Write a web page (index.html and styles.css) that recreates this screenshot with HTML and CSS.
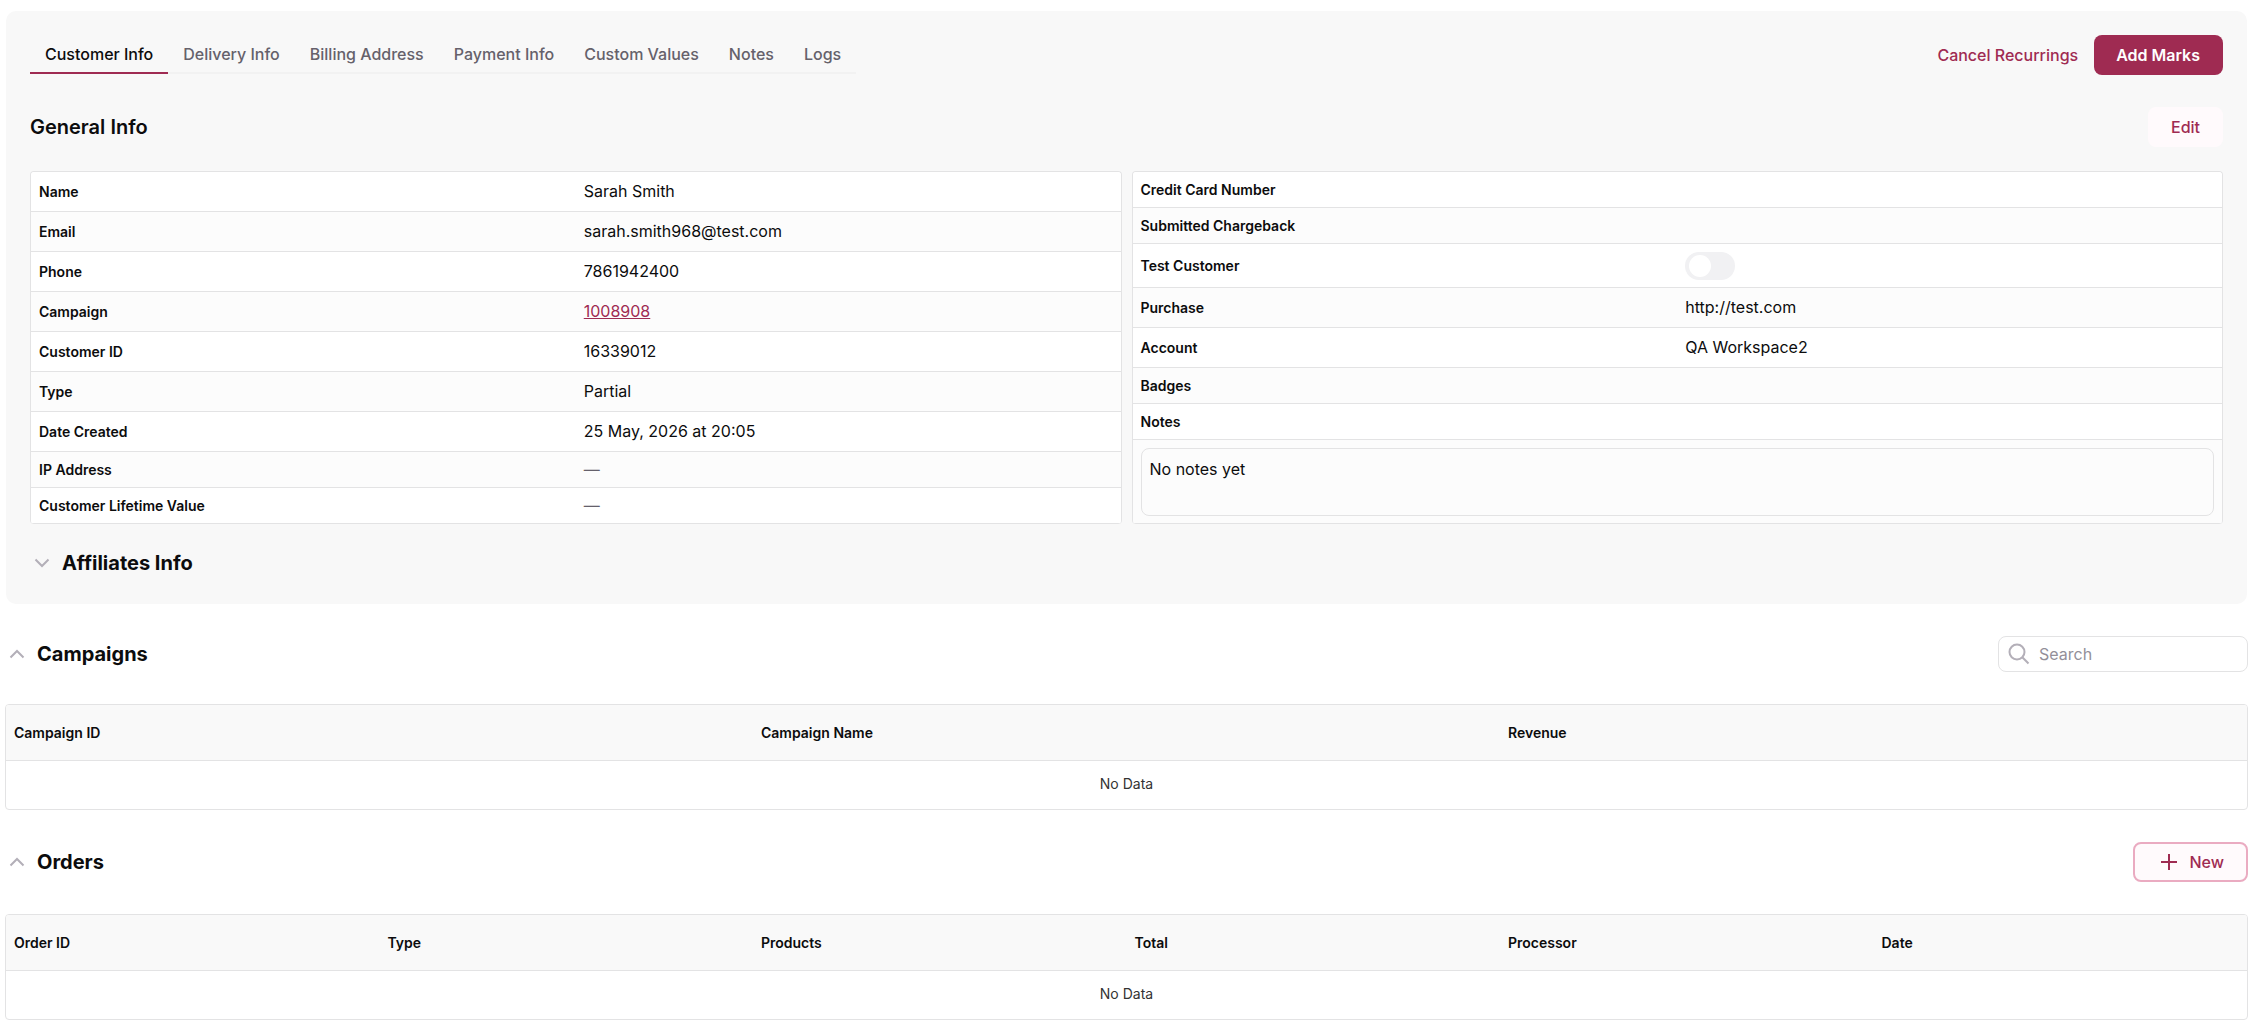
FILE: index.html
```html
<!doctype html>
<html lang="en">
<head>
  <meta charset="UTF-8">
  <meta name="viewport" content="width=device-width, initial-scale=1">
  <title>Customer Info</title>
  <link rel="stylesheet" href="styles.css">
</head>
<body>
  <main>
    <div class="panel">
      <div class="panel-top">
        <nav class="tabs">
          <a href="#customer" class="tab on">Customer Info</a>
          <a href="#delivery" class="tab">Delivery Info</a>
          <a href="#billing" class="tab">Billing Address</a>
          <a href="#payment" class="tab">Payment Info</a>
          <a href="#values" class="tab">Custom Values</a>
          <a href="#notes" class="tab">Notes</a>
          <a href="#logs" class="tab">Logs</a>
        </nav>
        <div class="actions">
          <button type="button" class="btn btn-text">Cancel Recurrings</button>
          <button type="button" class="btn btn-primary">Add Marks</button>
        </div>
      </div>

      <div class="panel-head">
        <h2 class="title">General Info</h2>
        <button type="button" class="btn btn-soft">Edit</button>
      </div>

      <div class="info">
        <table class="info-table">
          <tr><th scope="row">Name</th><td>Sarah Smith</td></tr>
          <tr><th scope="row">Email</th><td>sarah.smith968@test.com</td></tr>
          <tr><th scope="row">Phone</th><td>7861942400</td></tr>
          <tr><th scope="row">Campaign</th><td><a href="#campaign">1008908</a></td></tr>
          <tr><th scope="row">Customer ID</th><td>16339012</td></tr>
          <tr><th scope="row">Type</th><td>Partial</td></tr>
          <tr><th scope="row">Date Created</th><td>25 May, 2026 at 20:05</td></tr>
          <tr class="short"><th scope="row">IP Address</th><td class="none">—</td></tr>
          <tr class="short"><th scope="row">Customer Lifetime Value</th><td class="none">—</td></tr>
        </table>

        <table class="info-table">
          <tr class="short"><th scope="row">Credit Card Number</th><td></td></tr>
          <tr class="short"><th scope="row">Submitted Chargeback</th><td></td></tr>
          <tr class="tall"><th scope="row"><label for="test">Test Customer</label></th><td><input type="checkbox" id="test" class="switch"></td></tr>
          <tr><th scope="row">Purchase</th><td>http://test.com</td></tr>
          <tr><th scope="row">Account</th><td>QA Workspace2</td></tr>
          <tr class="short"><th scope="row">Badges</th><td></td></tr>
          <tr class="short"><th scope="row"><label for="note">Notes</label></th><td></td></tr>
          <tr><td colspan="2" class="note-cell"><textarea id="note" class="note" readonly>No notes yet</textarea></td></tr>
        </table>
      </div>

      <div class="fold">
        <button type="button" class="arrow" aria-label="Open Affiliates Info">
          <svg width="16" height="10" viewBox="0 0 16 10"><path d="M1.5 1.5L8 8L14.5 1.5"/></svg>
        </button>
        <h2 class="title">Affiliates Info</h2>
      </div>
    </div>

    <section>
      <div class="section-head">
        <button type="button" class="arrow" aria-label="Close Campaigns">
          <svg width="16" height="10" viewBox="0 0 16 10"><path d="M1.5 8.5L8 2L14.5 8.5"/></svg>
        </button>
        <h2 class="title">Campaigns</h2>
        <div class="search">
          <svg width="22" height="22" viewBox="0 0 22 22"><circle cx="9" cy="9" r="7.5"/><path d="M14.3 14.3L20.5 20.5"/></svg>
          <input type="text" placeholder="Search" aria-label="Search">
        </div>
      </div>
      <table class="list">
        <thead>
          <tr><th>Campaign ID</th><th>Campaign Name</th><th>Revenue</th></tr>
        </thead>
        <tbody>
          <tr><td colspan="3">No Data</td></tr>
        </tbody>
      </table>
    </section>

    <section>
      <div class="section-head">
        <button type="button" class="arrow" aria-label="Close Orders">
          <svg width="16" height="10" viewBox="0 0 16 10"><path d="M1.5 8.5L8 2L14.5 8.5"/></svg>
        </button>
        <h2 class="title">Orders</h2>
        <button type="button" class="btn btn-new">
          <svg width="16" height="16" viewBox="0 0 16 16"><path d="M8 0V16M0 8H16"/></svg>
          New
        </button>
      </div>
      <table class="list">
        <thead>
          <tr><th>Order ID</th><th>Type</th><th>Products</th><th>Total</th><th>Processor</th><th>Date</th></tr>
        </thead>
        <tbody>
          <tr><td colspan="6">No Data</td></tr>
        </tbody>
      </table>
    </section>
  </main>
</body>
</html>
```

FILE: styles.css
```css
*{margin:0;
  padding:0;
  box-sizing:border-box;}
body{padding:11px 6px 11px 5px;
     background:#fff;
     color:#0c0c0d;
     font:16px/20px Inter, "Liberation Sans", sans-serif;}
button, input, textarea{font:inherit;
                        color:inherit;}
svg{display:block;
    fill:none;
    stroke:#b3afb8;
    stroke-width:2;}

/* customer panel */
.panel{margin:0 1px;
       padding:24px 24px 26px;
       background:#f8f8f8;
       border-radius:10px;}
.panel-top, .panel-head{display:flex;
                        justify-content:space-between;
                        align-items:flex-start;}
.panel-head{align-items:center;
            margin:32px 0 24px;}
.tabs{display:flex;}
.tab{padding:9px 15px 8px;
     border-bottom:2px solid #f2f2f2;
     color:#65616b;
     font-weight:500;
     text-decoration:none;}
.tab.on{color:#0c0c0d;
        border-color:#9f2b52;}
.title{font-size:20px;
       line-height:30px;
       font-weight:600;}

/* buttons */
.actions{display:flex;}
.btn{height:40px;
     padding:0 23px;
     border:0;
     border-radius:8px;
     background:none;
     color:#9f2b52;
     font-weight:500;
     cursor:pointer;}
.btn-text{padding:0 16px;}
.btn-primary{padding:0 23px 0 22px;
             background:#9f2b52;
             color:#fff;
             font-weight:600;}
.btn-soft{background:#fffafc;}
.btn-new{display:flex;
         align-items:center;
         gap:13px;
         margin-left:auto;
         padding:0 22px 0 26px;
         border:2px solid #eaabc1;
         background:#fffafc;}
.btn-new svg{stroke:#9f2b52;}

/* general info */
.info{display:grid;
      grid-template-columns:1fr 1fr;
      gap:10px;}
.info-table, .list{width:100%;
                   table-layout:fixed;
                   border:1px solid #e3e3e4;
                   border-radius:4px;
                   border-spacing:0;
                   overflow:hidden;}
.info-table{border-bottom:0;}
.info-table tr{height:40px;
               background:#fff;}
.info-table tr:nth-child(even){background:#fcfcfc;}
.info-table .short{height:36px;}
.info-table .tall{height:44px;}
.info-table th, .info-table td{padding:0 8px;
                               border-bottom:1px solid #e3e3e4;
                               text-align:left;
                               vertical-align:middle;}
.info-table th{font-size:14px;
               font-weight:600;}
.info-table td{padding-bottom:2px;}
.info-table a{color:#9f2b52;}
.info-table .none{color:#65616b;}
.info-table .note-cell{padding:8px 8px 7px;}
.note{display:block;
      width:100%;
      height:68px;
      padding:10px 8px;
      border:1px solid #e3e3e4;
      border-radius:8px;
      background:none;
      resize:none;
      outline:0;}
.switch{display:block;
        appearance:none;
        width:50px;
        height:28px;
        padding:3px 4px;
        border-radius:14px;
        background:#f1f1f3;
        cursor:pointer;}
.info-table .tall td{padding-bottom:0;}
.switch:before{content:"";
               display:block;
               width:22px;
               height:22px;
               border-radius:50%;
               background:#fff;}
.switch:checked{background:#9f2b52;
                padding-left:24px;}

/* headings that open and close */
.fold, .section-head{display:flex;
                     align-items:center;}
.fold{margin-top:24px;}
.arrow{padding:4px;
       border:0;
       background:none;
       cursor:pointer;}
.arrow + .title{margin-left:8px;
                font-weight:700;}
.section-head{margin:32px 0;}
.search{display:flex;
        align-items:center;
        gap:9px;
        width:250px;
        height:36px;
        margin-left:auto;
        padding:0 9px;
        border:1px solid #e3e3e4;
        border-radius:8px;}
.search svg{flex:none;}
.search input{flex:1;
              min-width:0;
              border:0;
              outline:0;
              background:none;}
.search input::placeholder{color:#938f99;
                           opacity:1;}

/* lists */
.list th{height:56px;
         padding:0 8px;
         border-bottom:1px solid #e3e3e4;
         background:#f9f9f9;
         font-size:14px;
         font-weight:600;
         text-align:left;}
.list td{height:48px;
         padding-bottom:3px;
         color:#333;
         font-size:14px;
         text-align:center;}
```
